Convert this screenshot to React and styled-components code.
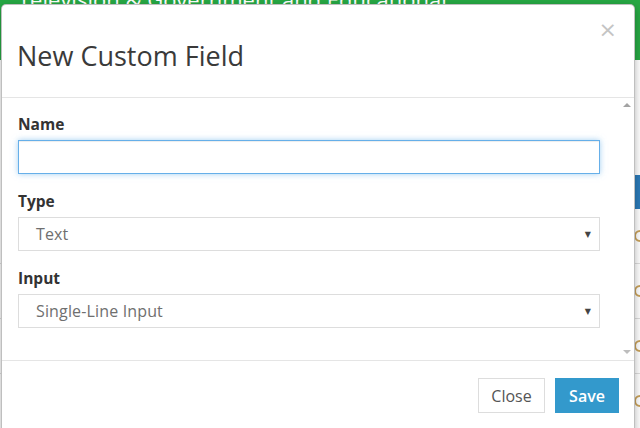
import React from "react";
import styled, { createGlobalStyle } from "styled-components";

const Global = createGlobalStyle`
  html, body { margin: 0; padding: 0; background: #fff; }
  body { font-family: "Open Sans", "Noto Sans", sans-serif; }
  * { box-sizing: border-box; }
`;

const Page = styled.div`
  position: relative;
  width: 640px;
  height: 428px;
  overflow: hidden;
  background: #fff;
`;

const Banner = styled.div`
  height: 60px;
  background: #27a844;
  color: #fff;
  font-size: 22px;
  line-height: 22px;
  padding: 0 18px;
  overflow: hidden;
`;

const BannerText = styled.div`
  margin-top: -12px;
  white-space: nowrap;
`;

const SideList = styled.div`
  display: flex;
  flex-direction: column;
  align-items: flex-end;
`;

const SideRow = styled.div`
  height: 55px;
  border-bottom: 1px solid #ddd;
  width: 100%;
  display: flex;
  justify-content: flex-end;
  align-items: center;
`;

const SideButton = styled.div`
  margin-top: 115px;
  width: 30px;
  height: 34px;
  background: #2b7bb9;
  align-self: flex-end;
`;

const Ring = styled.div`
  width: 12px;
  height: 12px;
  border-radius: 50%;
  border: 2px solid #c9a25a;
  margin-right: -6px;
`;

const Modal = styled.div`
  position: absolute;
  left: 1px;
  top: 4px;
  width: 634px;
  height: 432px;
  background: #fff;
  border: 1px solid rgba(0, 0, 0, 0.25);
  border-radius: 5px;
  box-shadow: 0 3px 9px rgba(0, 0, 0, 0.3);
  display: flex;
  flex-direction: column;
`;

const Header = styled.div`
  position: relative;
  height: 93px;
  padding: 0 15px;
  display: flex;
  align-items: center;
  border-bottom: 1px solid #e5e5e5;
`;

const Title = styled.h4`
  margin: 8px 0 0;
  font-size: 27px;
  font-weight: 400;
  color: #3a3a3a;
`;

const CloseX = styled.button`
  position: absolute;
  right: 17px;
  top: 14px;
  border: 0;
  background: none;
  padding: 0;
  font-family: "DejaVu Sans", sans-serif;
  font-size: 22px;
  line-height: 22px;
  color: #c4c4c4;
  cursor: pointer;
`;

const Body = styled.div`
  height: 263px;
  display: flex;
  border-bottom: 1px solid #e5e5e5;
`;

const Content = styled.div`
  flex: 1;
  padding: 16px 16px 0 16px;
`;

const Scrollbar = styled.div`
  width: 14px;
  display: flex;
  flex-direction: column;
  justify-content: space-between;
  align-items: center;
  padding: 5px 0 6px;
`;

const Arrow = styled.div`
  width: 0;
  height: 0;
  border-left: 4px solid transparent;
  border-right: 4px solid transparent;
  ${(p) =>
    p.$up
      ? "border-bottom: 4px solid #a3a3a3;"
      : "border-top: 4px solid #bdbdbd;"}
`;

const Group = styled.div`
  margin-bottom: 17px;
`;

const Label = styled.label`
  display: block;
  font-size: 15.5px;
  line-height: 20px;
  font-weight: 700;
  color: #333;
  margin-bottom: 6px;
`;

const TextInput = styled.input`
  display: block;
  width: 582px;
  height: 34px;
  border: 1px solid #66afe9;
  border-radius: 0;
  outline: 0;
  box-shadow: inset 0 1px 1px rgba(0, 0, 0, 0.075), 0 0 6px rgba(102, 175, 233, 0.6);
  padding: 6px 12px;
  font-size: 15px;
  font-family: inherit;
`;

const Select = styled.div`
  width: 582px;
  height: 34px;
  border: 1px solid #ddd;
  display: flex;
  align-items: center;
  justify-content: space-between;
  padding: 0 8px 0 17px;
  font-size: 16px;
  letter-spacing: 0.15px;
  color: #6f6f6f;
`;

const Caret = styled.span`
  font-family: "DejaVu Sans", sans-serif;
  font-size: 8px;
  color: #444;
`;

const Footer = styled.div`
  flex: 1;
  display: flex;
  justify-content: flex-end;
  align-items: flex-start;
  gap: 10px;
  padding: 17px 15px 0 0;
`;

const Button = styled.button`
  height: 35px;
  padding: 0 8px;
  font-family: inherit;
  font-size: 16px;
  border-radius: 0;
  border: 1px solid ${(p) => (p.$primary ? "#3399cc" : "#ddd")};
  background: ${(p) => (p.$primary ? "#3399cc" : "#fff")};
  color: ${(p) => (p.$primary ? "#fff" : "#555")};
  font-weight: ${(p) => (p.$primary ? 600 : 400)};
  min-width: ${(p) => (p.$primary ? "64px" : "67px")};
  cursor: pointer;
`;

export default function App() {
  return (
    <>
      <Global />
      <Page>
        <Banner>
          <BannerText>Television &amp; Government and Educational</BannerText>
        </Banner>
        <SideList>
          <SideButton />
          <SideRow><Ring /></SideRow>
          <SideRow><Ring /></SideRow>
          <SideRow><Ring /></SideRow>
          <SideRow><Ring /></SideRow>
        </SideList>
        <Modal>
          <Header>
            <Title>New Custom Field</Title>
            <CloseX aria-label="Close">×</CloseX>
          </Header>
          <Body>
            <Content>
              <Group>
                <Label>Name</Label>
                <TextInput />
              </Group>
              <Group>
                <Label>Type</Label>
                <Select>
                  Text
                  <Caret>▼</Caret>
                </Select>
              </Group>
              <Group>
                <Label>Input</Label>
                <Select>
                  Single-Line Input
                  <Caret>▼</Caret>
                </Select>
              </Group>
            </Content>
            <Scrollbar>
              <Arrow $up />
              <Arrow />
            </Scrollbar>
          </Body>
          <Footer>
            <Button>Close</Button>
            <Button $primary>Save</Button>
          </Footer>
        </Modal>
      </Page>
    </>
  );
}
